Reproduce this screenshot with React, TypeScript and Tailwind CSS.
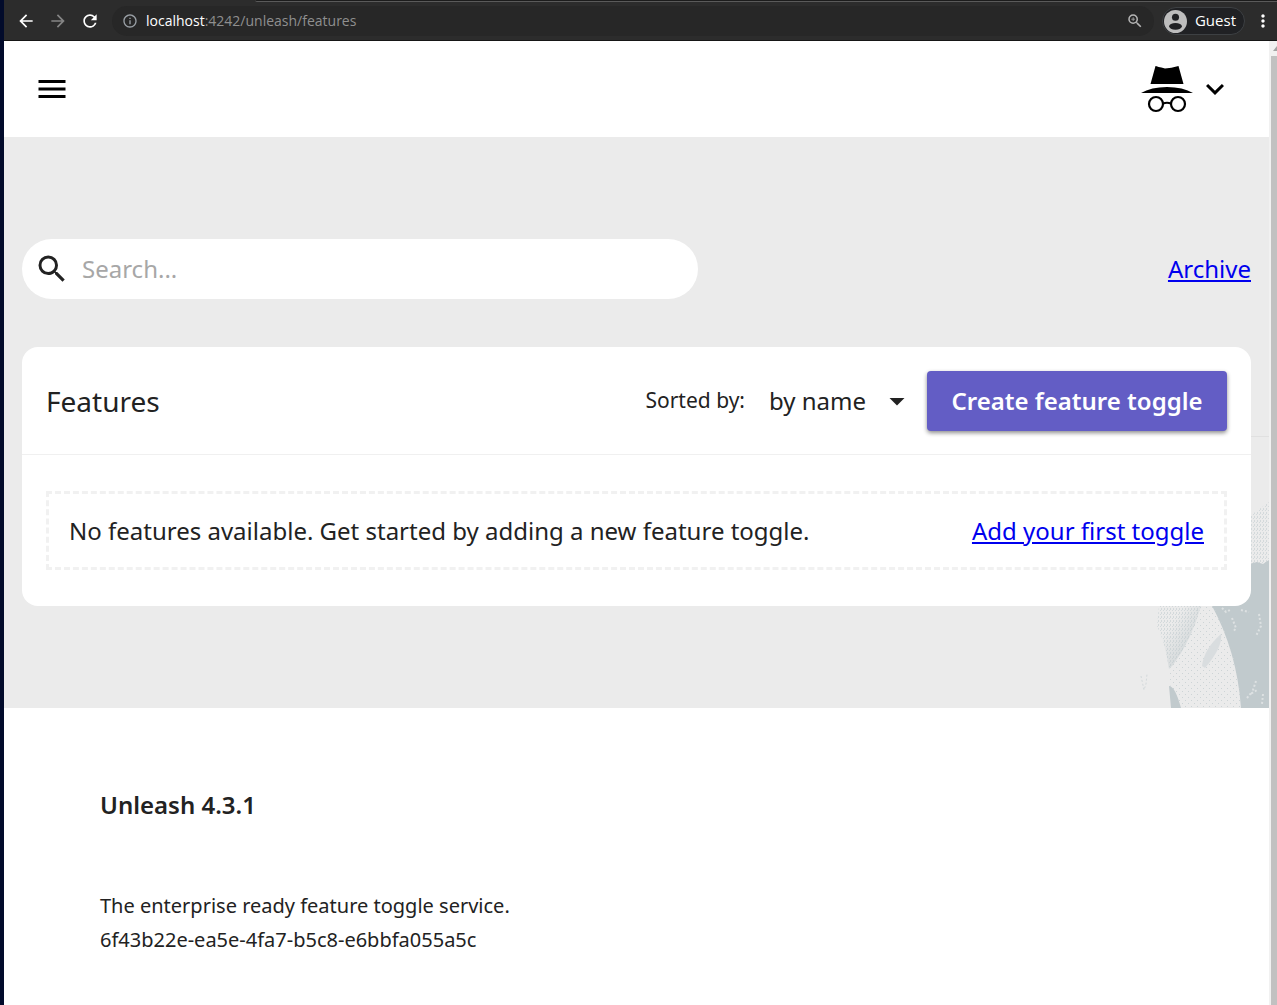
import { MdArrowBack, MdArrowForward, MdRefresh, MdInfoOutline, MdZoomIn, MdMoreVert, MdMenu, MdSearch, MdExpandMore, MdArrowDropDown } from "react-icons/md";

function GuestFace() {
  return (
    <svg viewBox="0 0 24 24" className="size-[23px]" aria-hidden="true">
      <circle cx="12" cy="12" r="12" fill="#bdbdbd" />
      <circle cx="12" cy="7.500" r="3.700" fill="#202124" />
      <ellipse cx="12" cy="17" rx="6.700" ry="3.500" fill="#202124" />
    </svg>
  );
}

function BrowserBar() {
  return (
    <div className="h-[41px] border-b border-b-[#161616] bg-[#2c2c2c]">
      <div className="flex h-0.5">
        <div className="w-[251px]" />
        <div className="flex-1 rounded-bl-sm border-b border-[#5a5a5a] bg-[#1c1c1c]" />
      </div>
      <div className="flex h-[38px] items-center pl-3 pr-1 font-['Open_Sans',sans-serif] text-sm">
        <button aria-label="Back" className="mr-3 text-white"><MdArrowBack size={20} /></button>
        <button aria-label="Forward" className="mr-3 text-[#858585]"><MdArrowForward size={20} /></button>
        <button aria-label="Reload" className="mr-3 text-white"><MdRefresh size={20} /></button>
        <div className="mr-2 flex h-[30px] min-w-0 flex-1 items-center rounded-full bg-[#272727] px-2.5">
          <MdInfoOutline size={16} className="mr-2 text-[#9aa0a6]" />
          <span className="flex-1 text-[#8f8f8f]"><span className="text-white">localhost</span>:4242/unleash/features</span>
          <button aria-label="Zoom" className="text-[#b5b5b5]"><MdZoomIn size={18} /></button>
        </div>
        <button className="mr-2 flex h-7 items-center gap-2 rounded-full border border-[#3d4043] bg-[#202124] pr-2 pl-px text-[15px] text-white">
          <GuestFace />
          Guest
        </button>
        <button aria-label="Browser menu" className="text-white"><MdMoreVert size={20} /></button>
      </div>
    </div>
  );
}

function Incognito() {
  return (
    <svg viewBox="0 0 52 48" className="h-12 w-[52px]" aria-hidden="true">
      <path d="M14.500 1 Q16 1.500 24 3.500 Q30 3 37.500 1 L42.500 19 H9.500 Z" />
      <path d="M0 28 Q10 22 26 22 Q42 22 52 28 Q26 28.200 0 28Z" />
      <g fill="none" stroke="black" strokeWidth="2.200"><circle cx="15" cy="39" r="7" /><circle cx="37" cy="39" r="7" /><path d="M22 38.500 Q26 37 30 38.500" /></g>
    </svg>
  );
}

function Statue() {
  return (
    <svg viewBox="0 0 132 272" className="absolute right-0 bottom-0 h-[272px] w-[132px]" aria-hidden="true">
      <defs>
        <pattern id="dots" width="3" height="4" patternUnits="userSpaceOnUse"><path d="M0 0h1v2H0zM2 2h1v1H2z" fill="#d3d9db" /></pattern>
        <pattern id="sparse" width="6" height="6" patternUnits="userSpaceOnUse"><path d="M0 0h1v1H0zM3 3h1v1H3z" fill="#cdd4d6" /></pattern>
        <linearGradient id="fold" x1="0" y1="0" x2="1" y2="1"><stop offset="0.3" stopColor="#c1cacd" stopOpacity="0" /><stop offset="0.75" stopColor="#c1cacd" stopOpacity="0.6" /></linearGradient>
      </defs>
      <path d="M114 0.500h18" stroke="#e0e0e0" />
      <path d="M110 82 L132 66 V130 H110Z" fill="url(#dots)" />
      <path d="M74 168 L112 128 L120 126 L126 128 L132 124 V272 H104 Q100 215 74 168Z" fill="#c1cacd" />
      <path d="M22 170 H64 Q54 205 36 229 L32 233 Q28 205 20 190Z" fill="url(#dots)" />
      <path d="M22 170 H64 Q54 205 36 229 L32 233 Q28 205 20 190Z" fill="url(#fold)" />
      <path d="M60 170 H76 Q102 215 104 272 H36 L32 233 Q50 214 60 170Z" fill="url(#sparse)" />
      <path d="M65 230 Q67 213 84 198 Q86 211 68 232Z" fill="#d9dddf" />
      <path d="M32 250 Q38 250 44 272 H34Z" fill="#c1cacd" />
      <path d="M4 240l3 14 2-6 1-10" fill="none" stroke="#d3d9db" strokeWidth="1" strokeDasharray="2 2" />
      <path d="M95 182l4 10-3 4M85 172l4 4 4-2M104 174l8 2M122 178l2 12-5 10M119 245l-4 12 5-3M126 258l-1 10M110 262l5-6" fill="none" stroke="#dde1e2" strokeWidth="2" strokeDasharray="2 2" />
    </svg>
  );
}

export default function App() {
  return (
    <div className="flex min-h-screen bg-[#020b2b] pl-1 font-['Noto_Sans',sans-serif] text-[#222]">
      <div className="flex min-w-0 flex-1 flex-col bg-white">
        <BrowserBar />
        <div className="flex flex-1">
          <div className="min-w-0 flex-1">
            <header className="flex h-24 items-center justify-between pl-[30px] pr-9 text-black">
              <button aria-label="Menu"><MdMenu size={36} /></button>
              <button aria-label="Account" className="flex items-center gap-1"><Incognito /><MdExpandMore size={36} /></button>
            </header>
            <main className="relative bg-[#ebebeb] px-[18px] pt-[102px] pb-[102px]">
              <Statue />
              <div className="relative mb-12 flex items-center justify-between">
                <label className="flex h-[60px] w-[55%] items-center gap-3 rounded-full bg-white px-3">
                  <MdSearch size={36} />
                  <input aria-label="Search" placeholder="Search..." className="min-w-0 flex-1 text-2xl outline-none placeholder:text-[#a7a7a7]" />
                </label>
                <a href="#archive" className="text-2xl text-[#0000ee] underline">Archive</a>
              </div>
              <section className="relative rounded-2xl bg-white">
                <div className="flex h-[107px] items-center px-6">
                  <h1 className="flex-1 text-[28px]">Features</h1>
                  <label htmlFor="sort" className="mr-6 text-[21px]">Sorted by:</label>
                  <div className="relative mr-3 flex items-center">
                    <select id="sort" className="w-[146px] appearance-none text-2xl outline-none"><option>by name</option></select>
                    <MdArrowDropDown size={36} className="pointer-events-none absolute right-0" />
                  </div>
                  <button className="h-[60px] min-w-[300px] rounded bg-[#635dc5] px-6 text-2xl font-semibold text-white shadow-[0_2px_4px_rgba(0,0,0,0.45)]">Create feature toggle</button>
                </div>
                <div className="border-t border-[#f0f0f0] px-6 py-9">
                  <div className="flex h-[79px] items-center justify-between border-3 border-dashed border-[#f1f1f1] px-5 text-2xl">
                    <p>No features available. Get started by adding a new feature toggle.</p>
                    <a href="#create" className="text-[#0000ee] underline">Add your first toggle</a>
                  </div>
                </div>
              </section>
            </main>
            <footer className="px-24 pt-20">
              <h2 className="mb-[67px] text-2xl leading-[34px] font-semibold">Unleash 4.3.1</h2>
              <p className="text-xl leading-[34px]">The enterprise ready feature toggle service.<br />6f43b22e-ea5e-4fa7-b5c8-e6bbfa055a5c</p>
            </footer>
          </div>
          <div className="flex w-2 flex-col bg-[#f1f1f1] pl-0.5">
            <svg viewBox="0 0 6 15" className="h-[15px] w-1.5" aria-hidden="true"><path d="M2 10 L6 5 V10Z" fill="#a3a3a3" /></svg>
            <div className="flex-1 bg-[#c1c1c1]" />
          </div>
        </div>
      </div>
    </div>
  );
}
